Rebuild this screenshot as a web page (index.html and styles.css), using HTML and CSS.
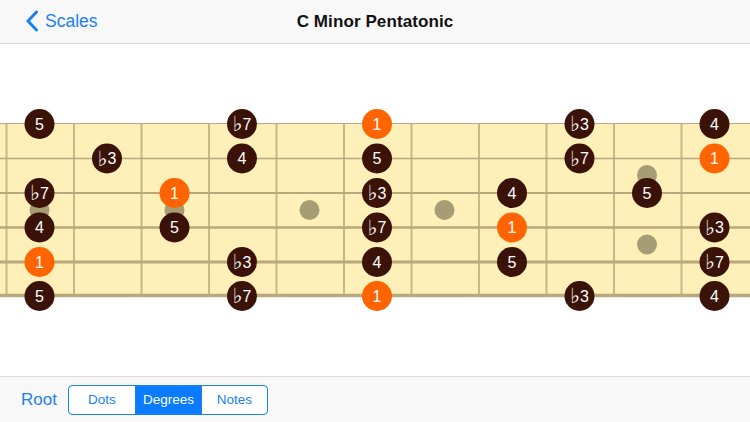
FILE: index.html
```html
<!DOCTYPE html>
<html>
<head>
<meta charset="utf-8">
<link rel="stylesheet" href="styles.css">
</head>
<body>
<div class="app">
  <header class="navbar">
    <a class="back">
      <svg class="chev" width="14" height="22" viewBox="0 0 14 22"><path d="M11.5 2 L3 11 L11.5 20" fill="none" stroke="#1c7ff2" stroke-width="3" stroke-linecap="round" stroke-linejoin="round"/></svg>
      <span>Scales</span>
    </a>
    <h1 class="title">C Minor Pentatonic</h1>
  </header>
  <main class="stage">
    <svg class="board" width="750" height="206" viewBox="0 108 750 206">
      <rect x="0" y="124" width="750" height="174" fill="#ffefb8"/>
      <g stroke="#c8b888" stroke-width="2">
        <line x1="6.5" y1="124" x2="6.5" y2="298"/>
        <line x1="74" y1="124" x2="74" y2="298"/>
        <line x1="141.5" y1="124" x2="141.5" y2="298"/>
        <line x1="209" y1="124" x2="209" y2="298"/>
        <line x1="276.5" y1="124" x2="276.5" y2="298"/>
        <line x1="344" y1="124" x2="344" y2="298"/>
        <line x1="411.5" y1="124" x2="411.5" y2="298"/>
        <line x1="479" y1="124" x2="479" y2="298"/>
        <line x1="546.5" y1="124" x2="546.5" y2="298"/>
        <line x1="614" y1="124" x2="614" y2="298"/>
        <line x1="681.5" y1="124" x2="681.5" y2="298"/>
      </g>
      <g stroke="#b9a87b">
        <line x1="0" y1="124.5" x2="750" y2="124.5" stroke-width="1"/>
        <line x1="0" y1="159.5" x2="750" y2="159.5" stroke-width="1.5"/>
        <line x1="0" y1="194" x2="750" y2="194" stroke-width="2"/>
        <line x1="0" y1="228.5" x2="750" y2="228.5" stroke-width="2.5"/>
        <line x1="0" y1="263" x2="750" y2="263" stroke-width="3"/>
        <line x1="0" y1="296.5" x2="750" y2="296.5" stroke-width="3.5"/>
      </g>
      <g fill="#a69d74">
        <circle cx="39.5" cy="211" r="10"/>
        <circle cx="174.5" cy="211" r="10"/>
        <circle cx="309.5" cy="211" r="10"/>
        <circle cx="444.5" cy="211" r="10"/>
        <circle cx="647" cy="176" r="10"/>
        <circle cx="647" cy="245.5" r="10"/>
      </g>
      <g class="notes">
        <!-- string 1 -->
        <circle class="n" cx="39.5" cy="125" r="15"/><text x="39.5" y="125">5</text>
        <circle class="n" cx="242" cy="125" r="15"/><text x="242" y="125"><tspan class="fl">♭</tspan>7</text>
        <circle class="r" cx="377" cy="125" r="15"/><text x="377" y="125">1</text>
        <circle class="n" cx="579.5" cy="125" r="15"/><text x="579.5" y="125"><tspan class="fl">♭</tspan>3</text>
        <circle class="n" cx="714.5" cy="125" r="15"/><text x="714.5" y="125">4</text>
        <!-- string 2 -->
        <circle class="n" cx="107" cy="159.5" r="15"/><text x="107" y="159.5"><tspan class="fl">♭</tspan>3</text>
        <circle class="n" cx="242" cy="159.5" r="15"/><text x="242" y="159.5">4</text>
        <circle class="n" cx="377" cy="159.5" r="15"/><text x="377" y="159.5">5</text>
        <circle class="n" cx="579.5" cy="159.5" r="15"/><text x="579.5" y="159.5"><tspan class="fl">♭</tspan>7</text>
        <circle class="r" cx="714.5" cy="159.5" r="15"/><text x="714.5" y="159.5">1</text>
        <!-- string 3 -->
        <circle class="n" cx="39.5" cy="194" r="15"/><text x="39.5" y="194"><tspan class="fl">♭</tspan>7</text>
        <circle class="r" cx="174.5" cy="194" r="15"/><text x="174.5" y="194">1</text>
        <circle class="n" cx="377" cy="194" r="15"/><text x="377" y="194"><tspan class="fl">♭</tspan>3</text>
        <circle class="n" cx="512" cy="194" r="15"/><text x="512" y="194">4</text>
        <circle class="n" cx="647" cy="194" r="15"/><text x="647" y="194">5</text>
        <!-- string 4 -->
        <circle class="n" cx="39.5" cy="228.5" r="15"/><text x="39.5" y="228.5">4</text>
        <circle class="n" cx="174.5" cy="228.5" r="15"/><text x="174.5" y="228.5">5</text>
        <circle class="n" cx="377" cy="228.5" r="15"/><text x="377" y="228.5"><tspan class="fl">♭</tspan>7</text>
        <circle class="r" cx="512" cy="228.5" r="15"/><text x="512" y="228.5">1</text>
        <circle class="n" cx="714.5" cy="228.5" r="15"/><text x="714.5" y="228.5"><tspan class="fl">♭</tspan>3</text>
        <!-- string 5 -->
        <circle class="r" cx="39.5" cy="263" r="15"/><text x="39.5" y="263">1</text>
        <circle class="n" cx="242" cy="263" r="15"/><text x="242" y="263"><tspan class="fl">♭</tspan>3</text>
        <circle class="n" cx="377" cy="263" r="15"/><text x="377" y="263">4</text>
        <circle class="n" cx="512" cy="263" r="15"/><text x="512" y="263">5</text>
        <circle class="n" cx="714.5" cy="263" r="15"/><text x="714.5" y="263"><tspan class="fl">♭</tspan>7</text>
        <!-- string 6 -->
        <circle class="n" cx="39.5" cy="297" r="15"/><text x="39.5" y="297">5</text>
        <circle class="n" cx="242" cy="297" r="15"/><text x="242" y="297"><tspan class="fl">♭</tspan>7</text>
        <circle class="r" cx="377" cy="297" r="15"/><text x="377" y="297">1</text>
        <circle class="n" cx="579.5" cy="297" r="15"/><text x="579.5" y="297"><tspan class="fl">♭</tspan>3</text>
        <circle class="n" cx="714.5" cy="297" r="15"/><text x="714.5" y="297">4</text>
      </g>
    </svg>
  </main>
  <footer class="toolbar">
    <span class="root">Root</span>
    <div class="seg">
      <span class="seg-item">Dots</span>
      <span class="seg-item active">Degrees</span>
      <span class="seg-item">Notes</span>
    </div>
  </footer>
</div>
</body>
</html>
```

FILE: styles.css
```css
* { box-sizing: border-box; }
html, body {
  margin: 0;
  padding: 0;
  background: #ffffff;
  font-family: "Liberation Sans", "Helvetica Neue", Arial, sans-serif;
}
.app {
  width: 750px;
  height: 422px;
  display: flex;
  flex-direction: column;
  overflow: hidden;
}
.navbar {
  height: 44px;
  flex: none;
  background: #f8f8f8;
  border-bottom: 1px solid #d9d9d9;
  display: grid;
  grid-template-columns: 1fr auto 1fr;
  align-items: center;
}
.back {
  display: flex;
  align-items: center;
  gap: 6px;
  padding-left: 25px;
  color: #1c7ff2;
  font-size: 17.5px;
}
.chev { display: block; margin-top: -1px; }
.title {
  margin: 0;
  font-size: 17px;
  font-weight: bold;
  color: #111;
  letter-spacing: 0.1px;
}
.stage {
  flex: 1;
  background: #fff;
  padding-top: 63px;
}
.board { display: block; }
.notes text {
  fill: #fff;
  font-family: "Liberation Sans", "DejaVu Sans", sans-serif;
  font-size: 16px;
  text-anchor: middle;
  dominant-baseline: central;
}
.notes .fl {
  font-family: "DejaVu Sans", sans-serif;
  font-size: 21px;
}
.n { fill: #3b1207; }
.r { fill: #ff6400; }
.toolbar {
  height: 46px;
  flex: none;
  background: #f8f8f8;
  border-top: 1px solid #dcdcdc;
  display: flex;
  align-items: center;
  padding-left: 21px;
  gap: 11px;
}
.root {
  color: #1c7ff2;
  font-size: 17px;
}
.seg {
  display: flex;
  height: 30px;
  border: 1px solid #1c7ff2;
  border-radius: 4px;
  overflow: hidden;
  background: #fff;
}
.seg-item {
  width: 66px;
  display: flex;
  align-items: center;
  justify-content: center;
  color: #1c7ff2;
  font-size: 13.5px;
}
.seg-item + .seg-item { border-left: 1px solid #1c7ff2; }
.seg-item.active {
  background: #0a7bff;
  color: #fff;
}
```
